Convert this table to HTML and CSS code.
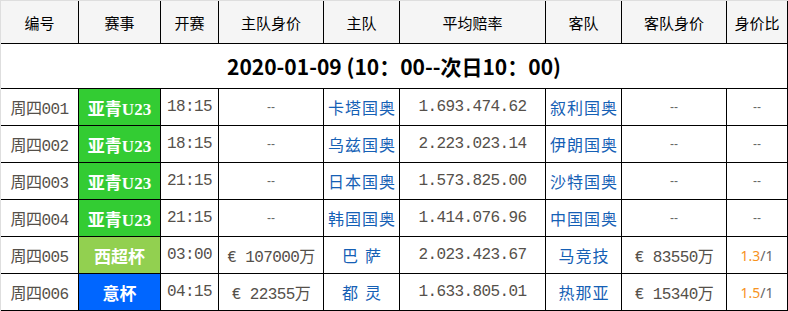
FILE: index.html
```html
<!DOCTYPE html>
<html lang="zh-CN">
<head>
<meta charset="utf-8">
<title>赛事列表</title>
<link rel="stylesheet" href="styles.css">
</head>
<body>
<div class="board">
  <div class="cell head">编号</div>
  <div class="cell head">赛事</div>
  <div class="cell head">开赛</div>
  <div class="cell head">主队身价</div>
  <div class="cell head">主队</div>
  <div class="cell head">平均赔率</div>
  <div class="cell head">客队</div>
  <div class="cell head">客队身价</div>
  <div class="cell head">身价比</div>

  <div class="cell date">2020-01-09 (10：00--次日10：00)</div>

  <div class="cell num">周四001</div>
  <div class="cell league u23">亚青U23</div>
  <div class="cell num">18:15</div>
  <div class="cell dash">--</div>
  <div class="cell team">卡塔国奥</div>
  <div class="cell num">1.693.474.62</div>
  <div class="cell team">叙利国奥</div>
  <div class="cell dash">--</div>
  <div class="cell dash">--</div>

  <div class="cell num">周四002</div>
  <div class="cell league u23">亚青U23</div>
  <div class="cell num">18:15</div>
  <div class="cell dash">--</div>
  <div class="cell team">乌兹国奥</div>
  <div class="cell num">2.223.023.14</div>
  <div class="cell team">伊朗国奥</div>
  <div class="cell dash">--</div>
  <div class="cell dash">--</div>

  <div class="cell num">周四003</div>
  <div class="cell league u23">亚青U23</div>
  <div class="cell num">21:15</div>
  <div class="cell dash">--</div>
  <div class="cell team">日本国奥</div>
  <div class="cell num">1.573.825.00</div>
  <div class="cell team">沙特国奥</div>
  <div class="cell dash">--</div>
  <div class="cell dash">--</div>

  <div class="cell num">周四004</div>
  <div class="cell league u23">亚青U23</div>
  <div class="cell num">21:15</div>
  <div class="cell dash">--</div>
  <div class="cell team">韩国国奥</div>
  <div class="cell num">1.414.076.96</div>
  <div class="cell team">中国国奥</div>
  <div class="cell dash">--</div>
  <div class="cell dash">--</div>

  <div class="cell num">周四005</div>
  <div class="cell league cup-es">西超杯</div>
  <div class="cell num">03:00</div>
  <div class="cell num">€ 107000万</div>
  <div class="cell team">巴<span class="gap"></span>萨</div>
  <div class="cell num">2.023.423.67</div>
  <div class="cell team">马竞技</div>
  <div class="cell num">€ 83550万</div>
  <div class="cell ratio"><span class="hi">1.3</span>/1</div>

  <div class="cell num">周四006</div>
  <div class="cell league cup-it">意杯</div>
  <div class="cell num">04:15</div>
  <div class="cell num">€ 22355万</div>
  <div class="cell team">都<span class="gap"></span>灵</div>
  <div class="cell num">1.633.805.01</div>
  <div class="cell team">热那亚</div>
  <div class="cell num">€ 15340万</div>
  <div class="cell ratio"><span class="hi">1.5</span>/1</div>
</div>
</body>
</html>
```
FILE: styles.css
```css
html, body {
  margin: 0;
  padding: 0;
  background: #dedede;
}

.board {
  margin: 1px 0 0 1px;
  width: 787px;
  display: grid;
  grid-template-columns: 78px 82px 58px 105px 76px 146px 76px 105px 61px;
  grid-template-rows: 43px 45px repeat(6, 37px);
  background: #ffffff;
}

.cell {
  box-sizing: border-box;
  border-right: 1px solid #000;
  border-bottom: 1px solid #000;
  display: flex;
  align-items: center;
  justify-content: center;
  white-space: nowrap;
  font-family: "Liberation Mono", "Noto Sans CJK SC", monospace;
  font-size: 15px;
  color: #555555;
  background: #ffffff;
}

.head {
  background: #f5f5f5;
  font-family: "Noto Sans CJK SC", "Noto Sans", sans-serif;
  font-size: 15px;
  color: #000;
}

.date {
  grid-column: 1 / -1;
  font-family: "Noto Sans CJK SC", "Noto Sans", sans-serif;
  font-weight: 700;
  font-size: 21px;
  color: #000;
}

.num {
  font-size: 16px;
  letter-spacing: -0.6px;
  color: #55504a;
}

.dash {
  font-family: "Liberation Sans", sans-serif;
  font-size: 12px;
  color: #666;
}

.team {
  color: #1560b5;
  font-size: 16px;
  letter-spacing: 1px;
  padding-left: 1px;
}

.gap {
  display: inline-block;
  width: 6px;
}

.league {
  font-family: "Liberation Serif", "Noto Sans CJK SC", serif;
  font-weight: 700;
  font-size: 17px;
  color: #ffffff;
}

.u23 { background: #33cc33; }
.cup-es { background: #92d050; }
.cup-it { background: #0066ff; }

.ratio {
  font-family: "Noto Sans", sans-serif;
  font-size: 14px;
  color: #666;
}

.hi { color: #f7931e; }
```
